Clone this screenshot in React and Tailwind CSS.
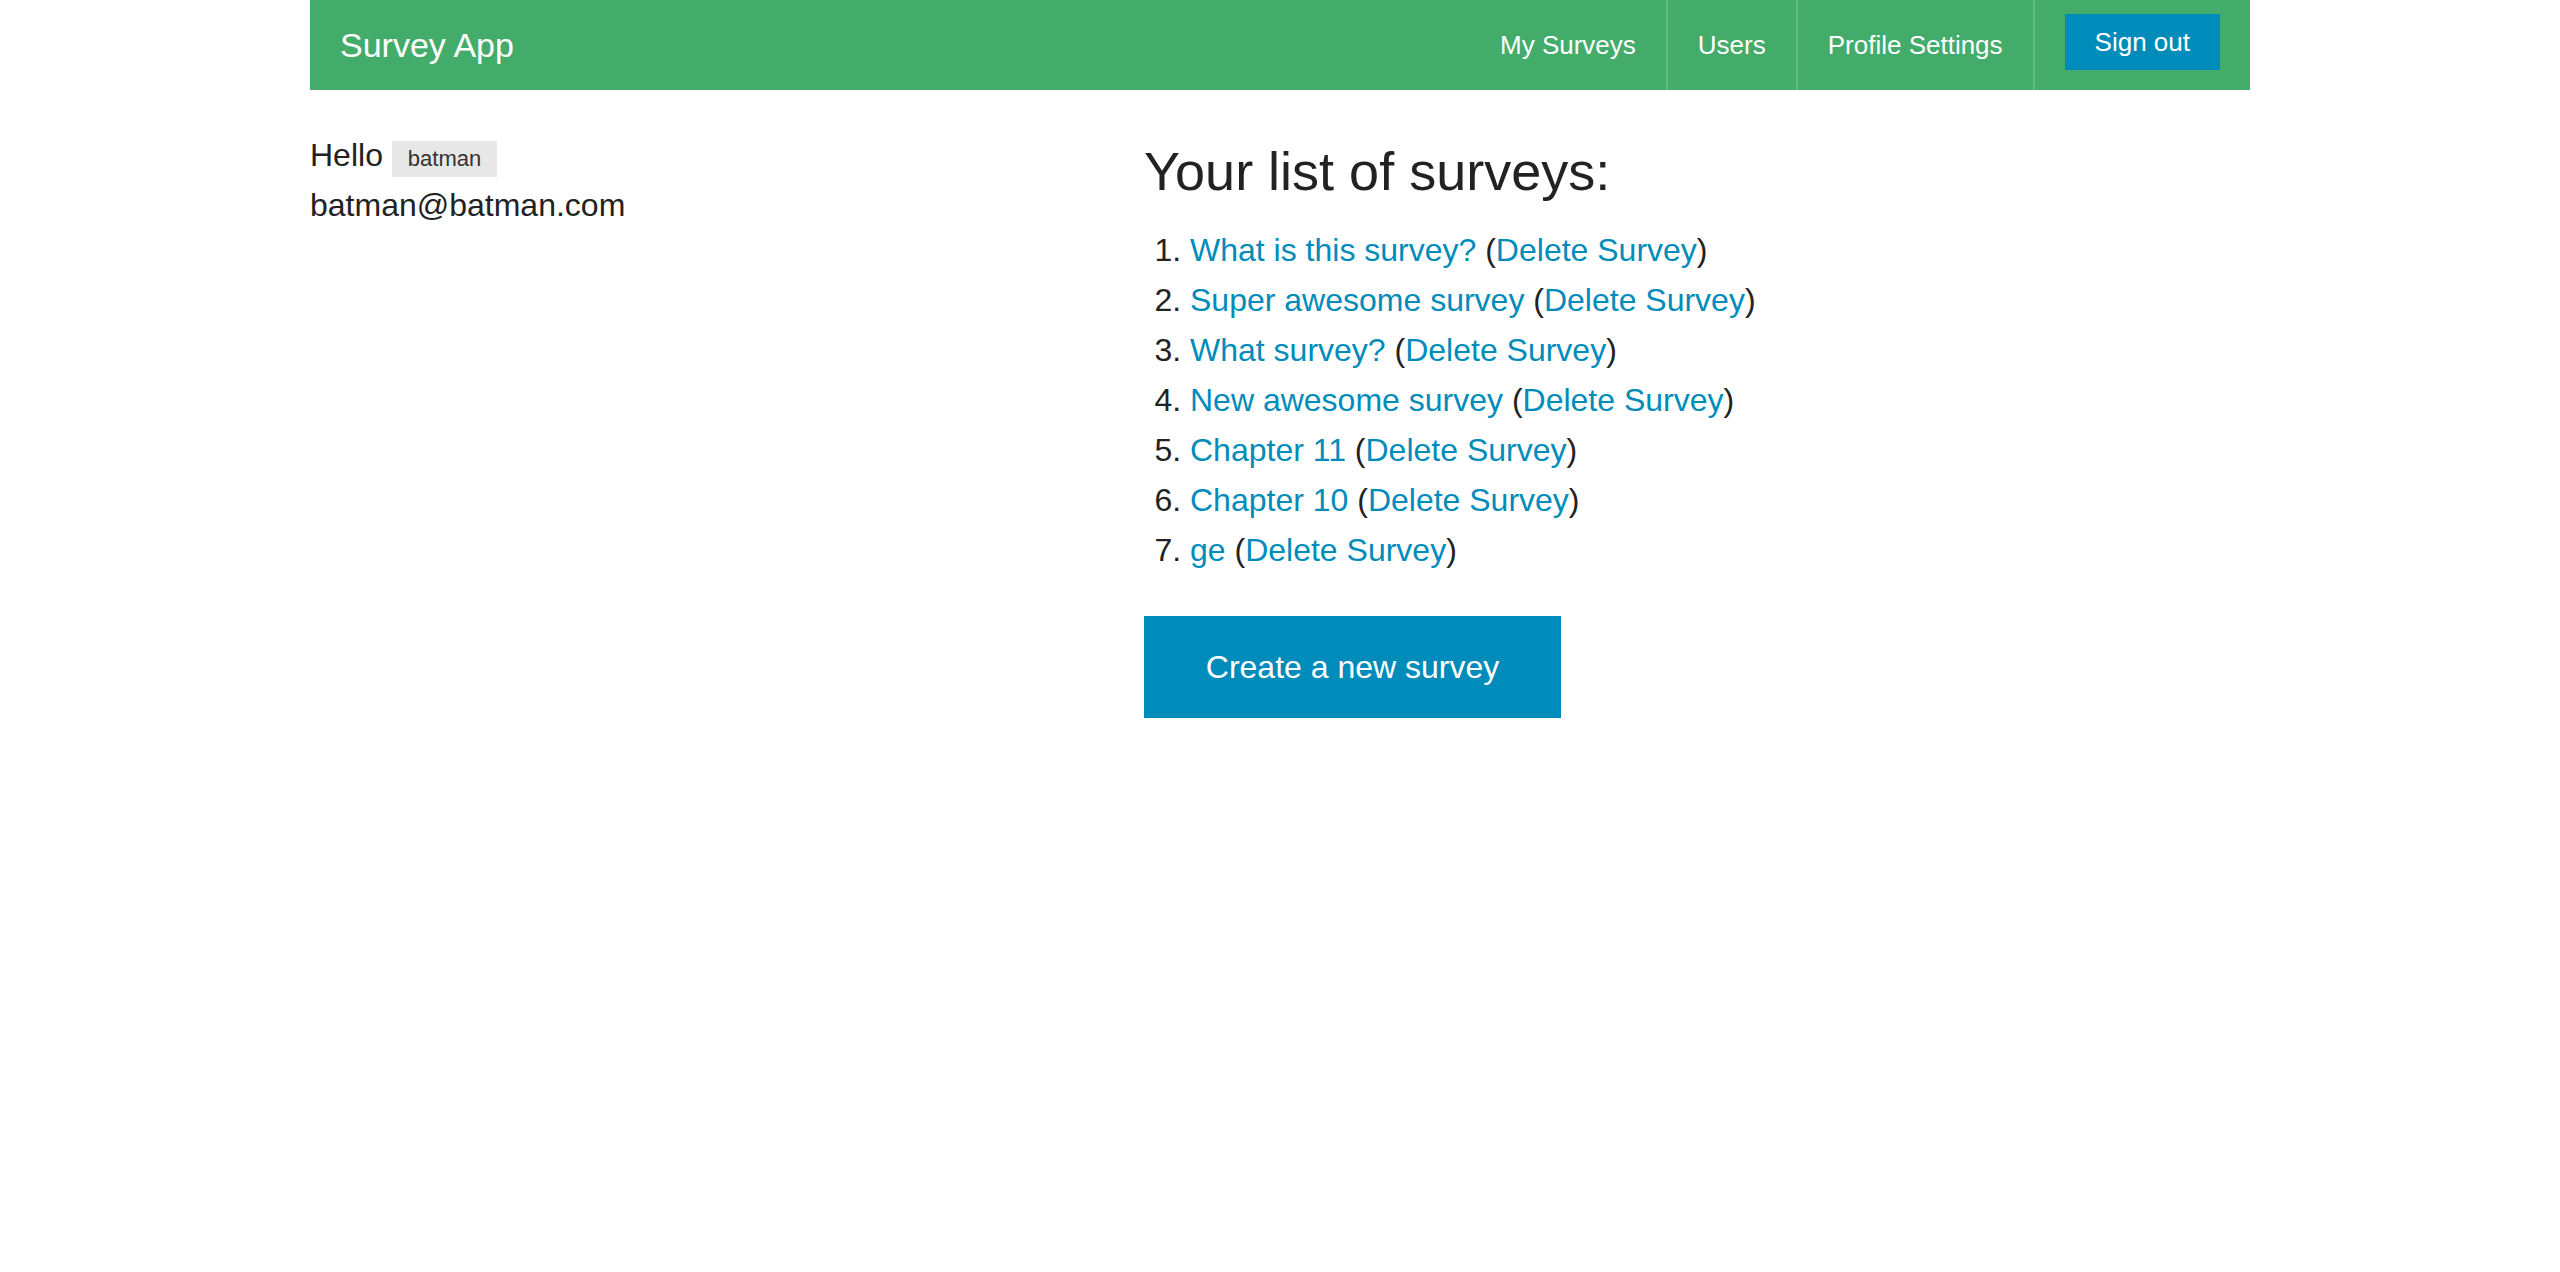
import React from "react";

/* ── Design tokens ──────────────────────────────────────────── */
const GREEN = "bg-[#43AC6A]";

const SURVEYS = [
  "What is this survey?",
  "Super awesome survey",
  "What survey?",
  "New awesome survey",
  "Chapter 11",
  "Chapter 10",
  "ge",
];

const NAV_LINKS = ["My Surveys", "Users", "Profile Settings"];

const App = () => {
  return (
    <div className="min-h-screen bg-white text-[#222222] font-['Liberation_Sans',Arial,sans-serif]">
      <div className="w-[1940px] mx-auto">
        {/* Top bar */}
        <nav className={`h-[90px] ${GREEN} flex items-center justify-between text-white`}>
          <a href="#" className="pl-[30px] text-[34px] leading-[90px]">
            Survey App
          </a>
          <ul className="flex h-full items-center">
            {NAV_LINKS.map((l) => (
              <React.Fragment key={l}>
                <li className="h-full">
                  <a href="#" className="h-full flex items-center px-[30px] text-[26px]">
                    {l}
                  </a>
                </li>
                <li className="w-[2px] h-full bg-[#5DBE81]" />
              </React.Fragment>
            ))}
            <li className="h-full flex items-start pt-[14px] px-[30px]">
              <a
                href="#"
                className="h-[56px] flex items-center px-[30px] text-[26px] text-white bg-[#008CBA]"
              >
                Sign out
              </a>
            </li>
          </ul>
        </nav>

        {/* Content */}
        <div className="flex pt-[40px]">
          <div className="w-[834px] text-[32px] leading-[50px]">
            <p>
              Hello{" "}
              <span className="inline-block px-4 text-[22px] leading-[36px] bg-[#E7E7E7] text-[#333333]">
                batman
              </span>
            </p>
            <p>batman@batman.com</p>
          </div>

          <div className="flex-1">
            <h3 className="mt-[3px] mb-4 text-[54px] leading-[76px]">Your list of surveys:</h3>
            <ol className="list-decimal pl-[46px] text-[32px] leading-[50px]">
              {SURVEYS.map((s) => (
                <li key={s}>
                  <a href="#" className="text-[#008CBA]">
                    {s}
                  </a>{" "}
                  (
                  <a href="#" className="text-[#008CBA]">
                    Delete Survey
                  </a>
                  )
                </li>
              ))}
            </ol>
            <a
              href="#"
              className="mt-[41px] w-[417px] h-[102px] flex items-center justify-center text-[32px] text-white bg-[#008CBA]"
            >
              Create a new survey
            </a>
          </div>
        </div>
      </div>
    </div>
  );
};

export default App;
